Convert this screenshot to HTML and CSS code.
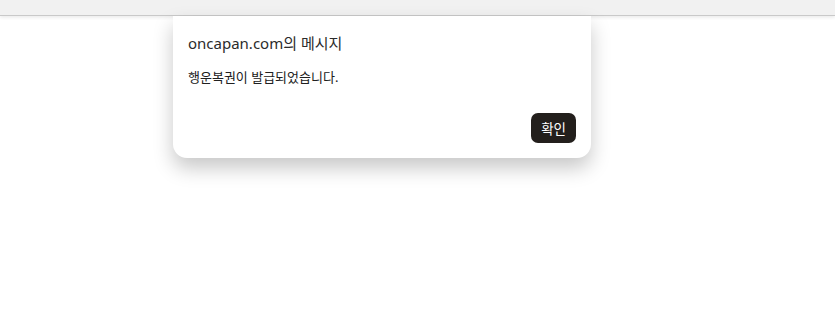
FILE: index.html
```html
<!DOCTYPE html>
<html>
<head>
  <title>oncapan.com</title>
  <link rel="stylesheet" href="styles.css">
</head>
<body>
  <div class="topbar"></div>
  <div class="dialog">
    <div class="dialog-title">oncapan.com의 메시지</div>
    <div class="dialog-message">행운복권이 발급되었습니다.</div>
    <div class="dialog-actions">
      <button class="dialog-button">확인</button>
    </div>
  </div>
</body>
</html>
```

FILE: styles.css
```css
html,
body {
  height: 100%;
}

body {
  margin: 0;
  min-height: 317px;
  background-color: #ffffff;
  font-family: "Noto Sans", "Noto Sans CJK KR", sans-serif;
}

.topbar {
  height: 15px;
  background-color: #f1f1f1;
  border-bottom: 1px solid #c9c9c9;
  box-shadow: 0 2px 3px rgba(0, 0, 0, 0.07);
}

.dialog {
  position: relative;
  width: 388px;
  margin-left: 173px;
  padding: 17px 15px 15px 15px;
  background-color: #ffffff;
  border-radius: 0 0 14px 14px;
  box-shadow: 0 10px 20px rgba(0, 0, 0, 0.22);
}

.dialog-title {
  font-size: 15px;
  line-height: 20px;
  color: #2b2b2b;
}

.dialog-message {
  margin-top: 15px;
  font-size: 13px;
  line-height: 18px;
  color: #202020;
}

.dialog-actions {
  display: flex;
  justify-content: flex-end;
  margin-top: 27px;
}

.dialog-button {
  background-color: #231f1c;
  color: #ffffff;
  border: none;
  border-radius: 7px;
  height: 30px;
  padding: 0 10px;
  font-family: "Noto Sans CJK KR", sans-serif;
  font-size: 13.5px;
  cursor: pointer;
}
```
